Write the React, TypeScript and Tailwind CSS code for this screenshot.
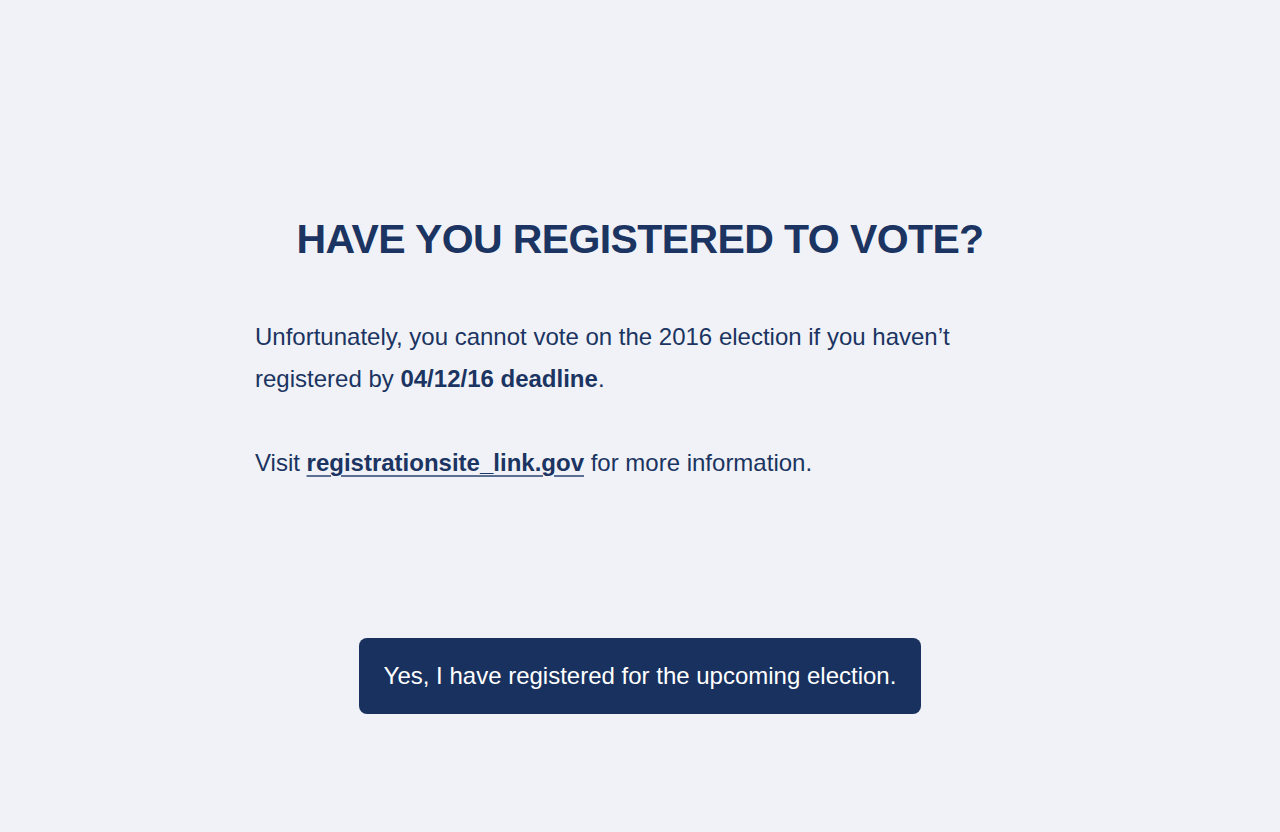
import React from 'react'

const font = { fontFamily: '"Liberation Sans", Arial, Helvetica, sans-serif' }

export default function App() {
  return (
    <div className="min-h-[832px] w-full bg-[#f0f2f7] text-[#1b3461]" style={font}>
      <div className="mx-auto flex w-[770px] flex-col pt-[214px]">
        <h1 className="text-center text-[41px] font-bold leading-[50px] tracking-[-0.6px]">
          HAVE YOU REGISTERED TO VOTE?
        </h1>

        <p className="mt-[52px] text-[24px] leading-[42px]">
          Unfortunately, you cannot vote on the 2016 election if you haven’t registered by{' '}
          <span className="font-bold">04/12/16 deadline</span>.
        </p>

        <p className="mt-[42px] text-[24px] leading-[42px]">
          Visit{' '}
          <a href="#" className="font-bold underline decoration-[#5b6f93] decoration-2 underline-offset-[4px]">
            registrationsite_link.gov
          </a>{' '}
          for more information.
        </p>

        <div className="mt-[154px] flex justify-center">
          <button className="rounded-[8px] bg-[#18315e] px-[25px] py-6 text-[24px] leading-[28px] text-white">
            Yes, I have registered for the upcoming election.
          </button>
        </div>
      </div>
    </div>
  )
}
